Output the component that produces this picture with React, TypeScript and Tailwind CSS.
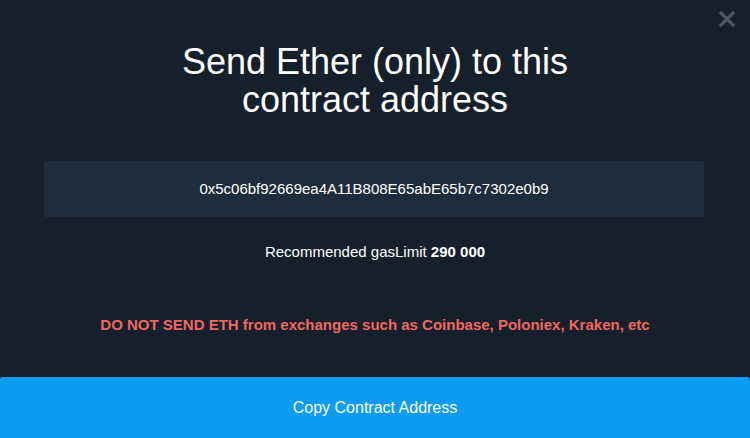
import React from "react";

export default function App() {
  return (
    <div
      className="w-[750px] h-[438px] bg-[#15202c] flex flex-col relative overflow-hidden"
      style={{ fontFamily: '"Liberation Sans", Arial, sans-serif' }}
    >
      <button className="absolute top-[10px] right-[14px] text-[#4a5866]">
        <svg width="18" height="18" viewBox="0 0 18 18">
          <path d="M3 3 L15 15 M15 3 L3 15" stroke="currentColor" strokeWidth="3.2" strokeLinecap="square" />
        </svg>
      </button>
      <div className="flex-1 flex flex-col items-center">
        <h1 className="mt-[43px] text-[36px] leading-[38px] text-white text-center font-normal">
          Send Ether (only) to this
          <br />
          contract address
        </h1>
        <div className="mt-[42px] ml-[-2px] w-[660px] h-[56px] bg-[#1e2d3d] rounded-[2px] flex items-center justify-center text-[15px] text-white">
          0x5c06bf92669ea4A11B808E65abE65b7c7302e0b9
        </div>
        <div className="mt-[24px] text-[15px] text-white">
          Recommended gasLimit <span className="font-bold">290 000</span>
        </div>
        <div className="mt-[50px] text-[15px] text-[#f0685e] font-bold">
          DO NOT SEND ETH from exchanges such as Coinbase, Poloniex, Kraken, etc
        </div>
      </div>
      <button className="h-[61px] w-full bg-[#0c9cf6] rounded-t-[3px] text-white text-[16px] flex items-center justify-center">
        Copy Contract Address
      </button>
    </div>
  );
}
